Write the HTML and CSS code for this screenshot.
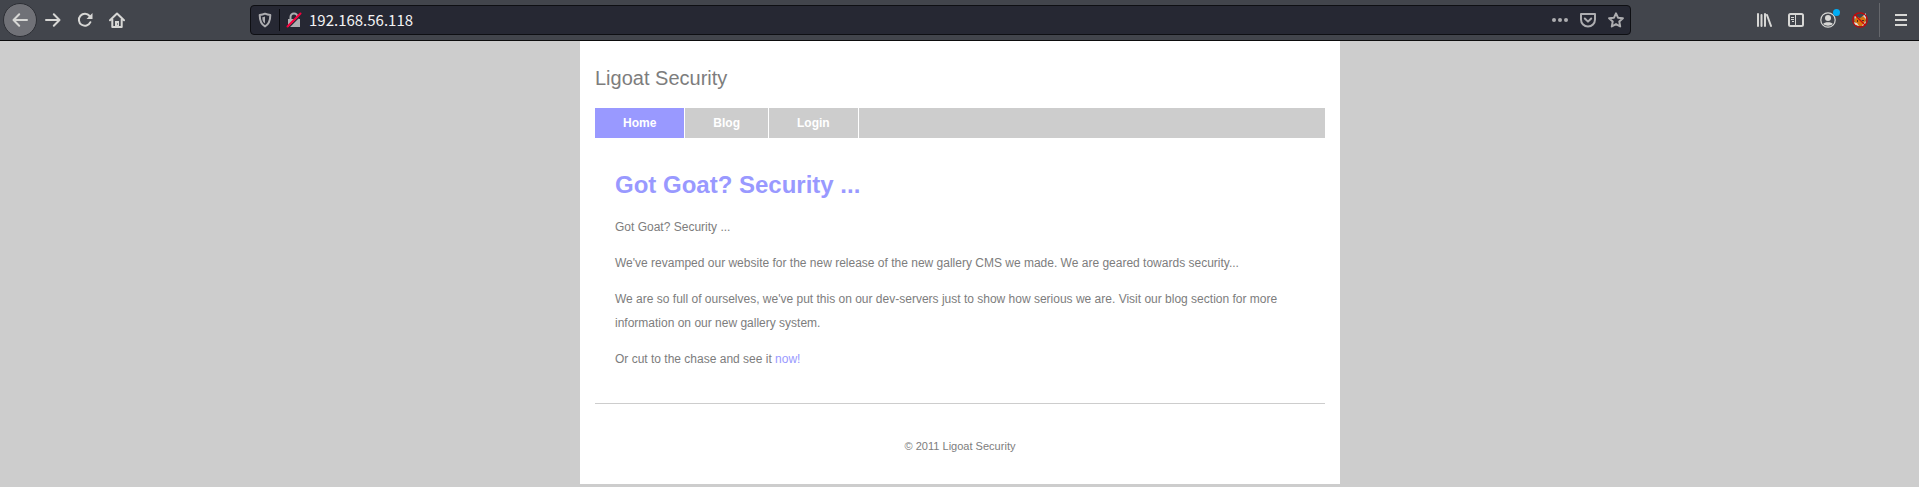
FILE: index.html
```html
<!DOCTYPE html>
<html lang="en">
<head>
<meta charset="utf-8">
<title>Ligoat Security</title>
<link rel="stylesheet" href="styles.css">
</head>
<body>
<header class="toolbar">
  <div class="nav-buttons">
    <span class="back"><svg class="icon" viewBox="0 0 16 16"><path d="M15 8H2M7.200 2.200 1.500 8l5.700 5.800"/></svg></span>
    <svg class="icon" viewBox="0 0 16 16"><path d="M1 8h13M8.800 2.200 14.500 8l-5.700 5.800"/></svg>
    <svg class="icon" viewBox="0 0 16 16"><path d="M13.400 10.200A6 6 0 1 1 12.600 4"/><path class="solid" d="M15.500 1v6h-6z"/></svg>
    <svg class="icon" viewBox="0 0 16 16"><path d="M1 8.300 8 1.500l7 6.800M3.300 7v8h9.400V7"/><path class="solid" d="M6 9h4v6H6z"/><path class="hole" d="M8 11.500h1v1H8z"/></svg>
  </div>
  <div class="urlbar">
    <svg class="icon muted shield" viewBox="0 0 16 16"><path d="M8 1.700c2 .9 3.800 1.200 5.300 1.300 0 5-.6 8.800-5.300 11.400C3.300 11.800 2.700 8 2.700 3c1.500-.1 3.300-.4 5.300-1.300z"/><path class="solid" d="M8 4.400v7.200C5.800 10 5.300 8.200 5.300 5.300 6.300 5.100 7.200 4.800 8 4.400z"/></svg>
    <span class="divider"></span>
    <svg class="icon muted lock" viewBox="0 0 16 16"><path d="M4.500 7V5a3.500 3.500 0 0 1 7 0v2"/><path class="solid" d="M2 7h12v8H2z"/><path class="gap" d="M2.500 15.500 15 3"/><path class="slash" d="M1.500 14.500 14.500 1.500"/></svg>
    <span class="address">192.168.56.118</span>
    <div class="page-actions">
      <svg class="icon muted" viewBox="0 0 16 16"><circle class="solid" cx="2" cy="8" r="2"/><circle class="solid" cx="8" cy="8" r="2"/><circle class="solid" cx="14" cy="8" r="2"/></svg>
      <svg class="icon muted" viewBox="0 0 16 16"><path d="M1 2h14v5.500a7 7 0 0 1-14 0zM4.800 6.500 8 9.600l3.200-3.100"/></svg>
      <svg class="icon muted" viewBox="0 0 16 16"><path d="m8 1.300 2 4.400 4.900.6-3.600 3.300.9 4.900L8 12.100l-4.200 2.400.9-4.900L1.100 6.300 6 5.700z"/></svg>
    </div>
  </div>
  <div class="tools">
    <svg class="icon" viewBox="0 0 16 16"><path d="M2 2v12M5.500 3v11M9 2v12M11 3 15 14"/></svg>
    <svg class="icon" viewBox="0 0 16 16"><rect x="1" y="2" width="14" height="12" rx="1.500"/><path class="line" d="M7.500 2v12M3 5.500h3M3 7.500h3M4 9.500h2"/></svg>
    <span class="account"><svg class="icon" viewBox="0 0 16 16"><circle class="thin" cx="8" cy="8" r="7.200"/><circle class="solid" cx="8" cy="6" r="3"/><path class="solid" d="M3.200 12C4 9.500 12 9.500 12.800 12 10.500 14.300 5.500 14.300 3.200 12z"/></svg><i class="badge"></i></span>
    <svg class="icon fox" viewBox="0 0 16 16"><path class="ear" d="m2 3 5 3-4 3zM14 1v7l-4-3z"/><path class="face" d="m2 9 2-4 4 1 3-2 3 3-1 5-3 2H6z"/><path class="cheek" d="m1 10 4 1 2 3-4-1zM14 9l-3 3-1 2 3-1z"/><path class="eye" d="M5 8h1v2H5zM10 8h2v1h-2z"/><circle class="ban" cx="8" cy="8" r="7.200"/><path class="ban" d="m3 3 10 10"/></svg>
    <span class="tool-divider"></span>
    <svg class="icon menu" viewBox="0 0 16 16"><path d="M2 3h12M2 8h12M2 13h12"/></svg>
  </div>
</header>
<main class="page">
  <div class="site-name">Ligoat Security</div>
  <nav class="tabs"><a class="tab active">Home</a><a class="tab">Blog</a><a class="tab">Login</a></nav>
  <article class="content">
    <h1>Got Goat? Security ...</h1>
    <p>Got Goat? Security ...</p>
    <p>We've revamped our website for the new release of the new gallery CMS we made. We are geared towards security...</p>
    <p>We are so full of ourselves, we've put this on our dev-servers just to show how serious we are. Visit our blog section for more information on our new gallery system.</p>
    <p>Or cut to the chase and see it <a class="link">now!</a></p>
  </article>
  <footer class="footer">© 2011 Ligoat Security</footer>
</main>
</body>
</html>
```
FILE: styles.css
```css
* { box-sizing: border-box; }
body {
  margin: 0;
  height: 487px;
  overflow: hidden;
  background: #cdcdcd;
  color: #7d7d7d;
  font: 12px/24px "Liberation Sans", Arial, sans-serif;
}
.toolbar {
  display: flex;
  align-items: center;
  height: 41px;
  background: #42454c;
  border-bottom: 1px solid #0c0c0d;
}
.icon {
  display: block;
  flex: none;
  width: 16px;
  height: 16px;
  fill: none;
  stroke: #d7d7d5;
  stroke-width: 2;
  stroke-linejoin: round;
  stroke-linecap: round;
}
.icon .solid { fill: #d7d7d5; stroke: none; }
.icon .hole { fill: #42454c; stroke: none; }
.icon .thin { stroke-width: 1.2; }
.icon .line { stroke-width: 1; stroke-linecap: butt; }
.icon.muted { stroke: #adadb0; }
.icon.muted .solid { fill: #adadb0; }
.icon .gap { stroke: #262833; stroke-width: 1.5; }
.icon .slash { stroke: #f7003c; stroke-width: 2; }
.nav-buttons {
  display: flex;
  align-items: center;
  gap: 16px;
  width: 250px;
  padding-left: 3px;
}
.back {
  display: grid;
  place-items: center;
  width: 34px;
  height: 34px;
  margin-right: -8px;
  border: 1px solid #2d2f35;
  border-radius: 50%;
  background: #707177;
}
.urlbar {
  display: flex;
  align-items: center;
  width: 1381px;
  height: 30px;
  padding: 0 6px;
  border: 1px solid #0e0f13;
  border-radius: 4px;
  background: #262833;
}
.divider { width: 1px; height: 22px; margin: 0 6px; background: #0a0b0f; }
.address {
  margin-left: 7px;
  color: #f3f3f3;
  font: 15px/24px "Noto Sans CJK SC", "Noto Sans", sans-serif;
}
.page-actions { display: flex; gap: 12px; margin-left: auto; }
.tools { display: flex; align-items: center; gap: 16px; margin-left: 125px; }
.account { position: relative; }
.badge {
  position: absolute;
  top: -3px;
  right: -4px;
  width: 7px;
  height: 7px;
  border-radius: 50%;
  background: #00adf5;
}
.tool-divider { width: 1px; height: 34px; margin: 0 -3px 0 -5px; background: #65676c; }
.menu { stroke-linecap: butt; }
.fox .ear { fill: #d7d7d5; stroke: none; }
.fox .face { fill: #d87510; stroke: none; }
.fox .cheek { fill: #e5ded2; stroke: none; }
.fox .eye { fill: #452b20; stroke: none; }
.fox .ban { stroke: #c90508; stroke-width: 1.300; }
.page {
  width: 760px;
  height: 443px;
  margin-left: 580px;
  padding: 25px 15px 0;
  background: #fff;
}
.site-name { height: 42px; font-size: 20px; }
.tabs { display: flex; height: 30px; background: #cdcdcd; }
.tab {
  padding: 0 28px;
  border-right: 1px solid #fff;
  color: #fff;
  font-weight: bold;
  line-height: 30px;
}
.active { background: #99f; }
.content { height: 266px; padding: 29px 20px 0; border-bottom: 1px solid #cdcdcd; }
h1 { margin: 0 0 13px; color: #99f; font-size: 24px; line-height: 35px; }
p { margin: 0 0 12px; }
.link { color: #99f; }
.footer { padding-top: 30px; font-size: 11.040px; text-align: center; }
```
